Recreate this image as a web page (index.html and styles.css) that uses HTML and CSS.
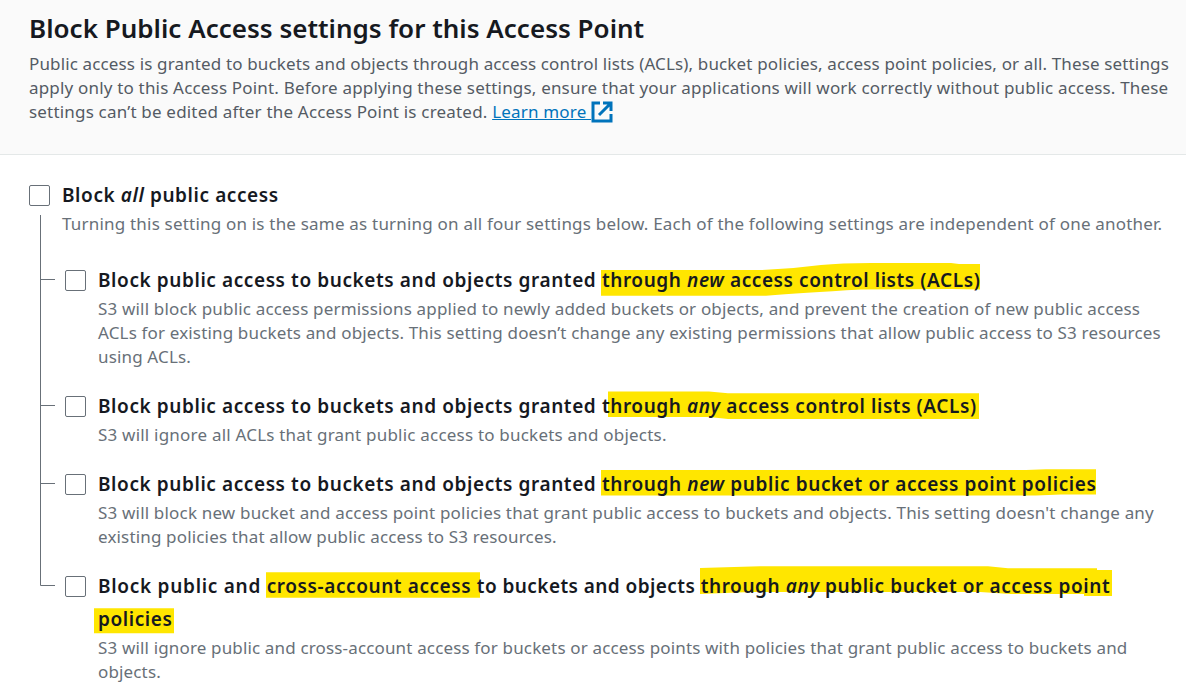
FILE: index.html
```
<!DOCTYPE html>
<html lang="en">
<head>
<meta charset="utf-8">
<title>Block Public Access settings</title>
<link rel="stylesheet" href="styles.css">
</head>
<body>
<header class="header">
  <h2 class="title">Block Public Access settings for this Access Point</h2>
  <p class="desc intro">
    <span class="line i1">Public access is granted to buckets and objects through access control lists (ACLs), bucket policies, access point policies, or all. These settings</span>
    <span class="line i2">apply only to this Access Point. Before applying these settings, ensure that your applications will work correctly without public access. These</span>
    <span class="line i3">settings can’t be edited after the Access Point is created. <a class="link" href="#">Learn more <svg class="ext" viewBox="0 0 22 22"><path d="M9 2H2V20H20V13M12 2H20V10M20 2L8 14"/></svg></a></span>
  </p>
</header>
<main class="body">
  <div class="row parent">
    <span class="box"></span>
    <div class="text">
      <div class="label">Block <em>all</em> public access</div>
      <p class="desc"><span class="line d0">Turning this setting on is the same as turning on all four settings below. Each of the following settings are independent of one another.</span></p>
    </div>
  </div>
  <div class="tree">
    <div class="row child">
      <span class="box"></span>
      <div class="text">
        <div class="label">Block public access to buckets and objects granted <span class="hl">through <em>new</em> access control lists (ACLs)<svg class="mark" viewBox="0 0 380 40"><path d="M0 10H160Q190 9 220 5Q240 3 270 3H350L358 4H379V29.500L350 29Q300 29 260 29.500Q200 33 165 35.700H0Z"/></svg></span></div>
        <p class="desc"><span class="line d1">S3 will block public access permissions applied to newly added buckets or objects, and prevent the creation of new public access</span>
        <span class="line d2">ACLs for existing buckets and objects. This setting doesn’t change any existing permissions that allow public access to S3 resources</span>
        <span class="line">using ACLs.</span></p>
      </div>
    </div>
    <div class="row child">
      <span class="box"></span>
      <div class="text">
        <div class="label">Block public access to buckets and objects granted <span class="hl">through <em>any</em> access control lists (ACLs)<svg class="mark" viewBox="0 0 380 40"><path d="M7 5.500H108L127 7.300H378V33H127L108 31H7Z"/></svg></span></div>
        <p class="desc"><span class="line d4">S3 will ignore all ACLs that grant public access to buckets and objects.</span></p>
      </div>
    </div>
    <div class="row child">
      <span class="box"></span>
      <div class="text">
        <div class="label">Block public access to buckets and objects granted <span class="hl l3">through <em>new</em> public bucket or access point policies<svg class="mark" viewBox="0 0 380 40"><path d="M0 6H425L445 5.300H495V30.500H460L435 31.500H0Z"/></svg></span></div>
        <p class="desc"><span class="line d5">S3 will block new bucket and access point policies that grant public access to buckets and objects. This setting doesn't change any</span>
        <span class="line d6">existing policies that allow public access to S3 resources.</span></p>
      </div>
    </div>
    <div class="row child">
      <span class="box"></span>
      <div class="text">
        <div class="label"><span class="lead">Block public and </span><span class="hl">cross-account access <svg class="mark" viewBox="0 0 380 40"><path d="M0 6.300H214V31.700H0Z"/></svg></span><span class="mid">to buckets and objects </span><span class="hl">through <em>any</em> public bucket or access point<svg class="mark" viewBox="0 0 380 40"><path d="M0 2L60 .3H288L308 2.300H397V4H412V30H384V28H310L280 26H50L0 28Z"/></svg></span></div>
        <div class="label"><span class="hl">policies<svg class="mark" viewBox="0 0 380 40"><path d="M-3 9.300H77V34.300H-3Z"/></svg></span></div>
        <p class="desc"><span class="line d7">S3 will ignore public and cross-account access for buckets or access points with policies that grant public access to buckets and</span>
        <span class="line">objects.</span></p>
      </div>
    </div>
    <svg class="lines" viewBox="0 0 16 371"><path d="M.5 0V370.5H15M0 64.5H15M0 190.5H15M0 268.5H15"/></svg>
  </div>
</main>
</body>
</html>
```
FILE: styles.css
```
* { box-sizing: border-box; }
body { margin: 0; height: 691px; overflow: hidden; background: #fff; font-family: "Noto Sans", sans-serif; color: #16191f; }
.header { height: 155px; padding: 9px 0 0 29px; background: #fafafa; border-bottom: 1px solid #e4e8e8; }
.title { margin: 0; font-size: 26px; line-height: 38px; font-weight: 600; white-space: nowrap; letter-spacing: .01px; }
.desc { margin: 0; font-size: 17px; line-height: 24px; color: #687078; }
.intro { margin-top: 5px; color: #545b64; }
.line { display: block; white-space: nowrap; width: max-content; letter-spacing: .15px; }
.i1 { letter-spacing: .14px; }
.i2 { letter-spacing: .183px; }
.i3 { letter-spacing: .19px; }
.d0 { letter-spacing: .2px; }
.d1 { letter-spacing: .178px; }
.d2 { letter-spacing: .16px; }
.d4 { letter-spacing: .21px; }
.d5 { letter-spacing: .182px; }
.d6 { letter-spacing: .16px; }
.d7 { letter-spacing: .153px; }
.link { color: #0073bb; text-decoration: underline; }
.ext { width: 22px; height: 22px; vertical-align: -5px; fill: none; stroke: #0073bb; stroke-width: 3; }
.body { padding: 24px 0 0 29px; }
.row { display: flex; gap: 12px; }
.box { flex: none; width: 21px; height: 21px; margin-top: 6px; border: 1px solid #687078; border-radius: 2px; background: #fff; }
.label { position: relative; z-index: 0; font-size: 19px; line-height: 33px; font-weight: 600; white-space: nowrap; width: max-content; letter-spacing: .585px; }
.l3 { letter-spacing: .61px; }
.lead { letter-spacing: .72px; }
.mid { letter-spacing: .43px; }
.tree { position: relative; display: flex; flex-direction: column; gap: 21px; margin: 28px 0 0 36px; }
.lines { position: absolute; left: -25px; top: -49px; width: 16px; height: 371px; fill: none; stroke: #687078; stroke-width: 1; }
.hl { position: relative; display: inline-block; white-space: pre; }
.mark { position: absolute; z-index: -1; left: -1px; top: -4px; width: 380px; height: 40px; fill: #ffe600; overflow: visible; }
```
